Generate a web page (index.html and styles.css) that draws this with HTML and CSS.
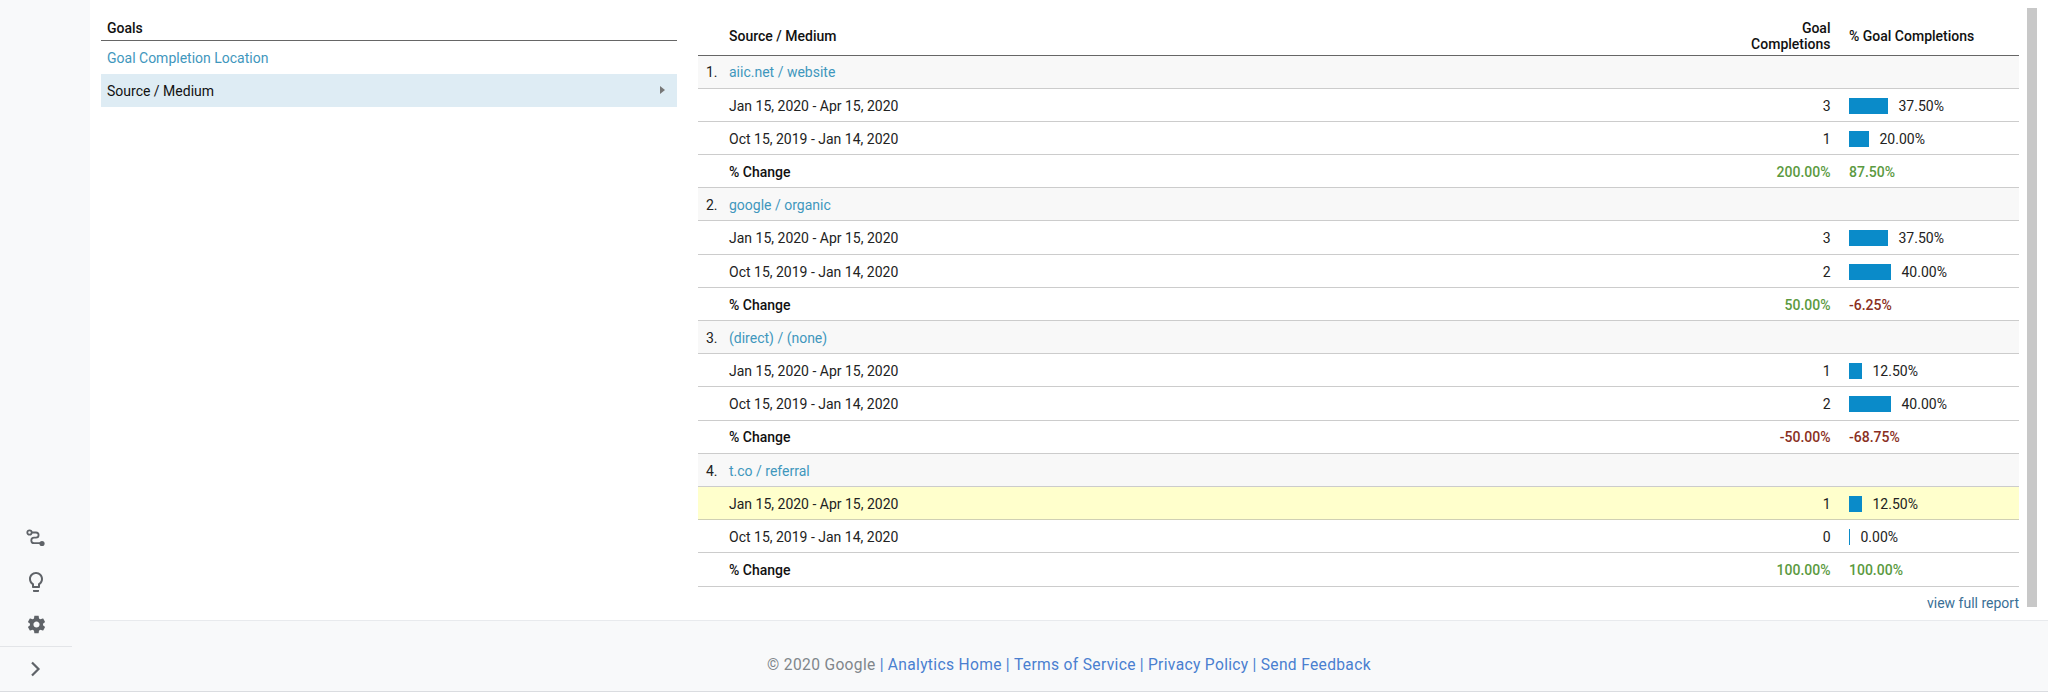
FILE: index.html
```html
<!DOCTYPE html>
<html lang="en">
<head>
  <meta charset="UTF-8">
  <title>Goals - Source / Medium</title>
  <link rel="stylesheet" href="styles.css">
</head>
<body>
  <div class="page">
    <!-- left rail -->
    <div class="rail">
      <div class="rail-icon">
        <svg width="20" height="20" viewBox="0 0 20 20"><circle cx="3.5" cy="3.5" r="2.2" fill="none" stroke="#5f6368" stroke-width="1.8"/><path d="M5.7 3.5h4.3a2.6 2.6 0 0 1 0 5.2H8a2.7 2.7 0 0 0 0 5.4h6.5" fill="none" stroke="#5f6368" stroke-width="1.8"/><circle cx="16" cy="14.5" r="2.6" fill="#5f6368"/></svg>
      </div>
      <div class="rail-icon">
        <svg width="24" height="24" viewBox="0 0 24 24"><path fill="#5f6368" d="M9 21c0 .55.45 1 1 1h4c.55 0 1-.45 1-1v-1H9v1zm3-19C8.14 2 5 5.14 5 9c0 2.38 1.19 4.47 3 5.74V17c0 .55.45 1 1 1h6c.55 0 1-.45 1-1v-2.26c1.81-1.27 3-3.36 3-5.74 0-3.86-3.14-7-7-7zm2.85 11.1l-.85.6V16h-4v-2.3l-.85-.6C7.8 12.16 7 10.63 7 9c0-2.76 2.24-5 5-5s5 2.24 5 5c0 1.63-.8 3.16-2.15 4.1z"/></svg>
      </div>
      <div class="rail-icon">
        <svg width="21" height="21" viewBox="0 0 24 24"><path fill="#5f6368" d="M19.43 12.98c.04-.32.07-.64.07-.98s-.03-.66-.07-.98l2.11-1.65c.19-.15.24-.42.12-.64l-2-3.46c-.12-.22-.39-.3-.61-.22l-2.49 1c-.52-.4-1.08-.73-1.69-.98l-.38-2.65C14.46 2.18 14.25 2 14 2h-4c-.25 0-.46.18-.49.42l-.38 2.65c-.61.25-1.17.59-1.69.98l-2.49-1c-.23-.09-.49 0-.61.22l-2 3.46c-.13.22-.07.49.12.64l2.11 1.65c-.04.32-.07.65-.07.98s.03.66.07.98l-2.11 1.65c-.19.15-.24.42-.12.64l2 3.46c.12.22.39.3.61.22l2.49-1c.52.4 1.08.73 1.69.98l.38 2.65c.03.24.24.42.49.42h4c.25 0 .46-.18.49-.42l.38-2.65c.61-.25 1.17-.59 1.69-.98l2.49 1c.23.09.49 0 .61-.22l2-3.46c.12-.22.07-.49-.12-.64l-2.11-1.65zM12 15.5c-1.93 0-3.5-1.57-3.5-3.5s1.57-3.5 3.5-3.5 3.5 1.57 3.5 3.5-1.57 3.5-3.5 3.5z"/></svg>
      </div>
      <div class="rail-toggle">
        <svg width="20" height="20" viewBox="0 0 20 20"><path d="M6 3.5l6.5 6.5-6.5 6.5" fill="none" stroke="#5f6368" stroke-width="2.2"/></svg>
      </div>
    </div>

    <div class="main">
      <div class="content">
        <!-- dimension list -->
        <div class="dims">
          <div class="dims-title">Goals</div>
          <div class="dim"><a href="#">Goal Completion Location</a></div>
          <div class="dim dim-active">Source / Medium<span class="dim-arrow"></span></div>
        </div>

        <!-- report table -->
        <div class="report">
          <div class="row head">
            <div class="c-rank"></div>
            <div class="c-name">Source / Medium</div>
            <div class="c-num">Goal<br>Completions</div>
            <div class="c-pct">% Goal Completions</div>
          </div>

          <div class="row group">
            <div class="c-rank">1.</div>
            <div class="c-name"><a href="#">aiic.net / website</a></div>
          </div>
          <div class="row">
            <div class="c-rank"></div>
            <div class="c-name">Jan 15, 2020 - Apr 15, 2020</div>
            <div class="c-num">3</div>
            <div class="c-pct"><span class="bar" style="width: 39px"></span>37.50%</div>
          </div>
          <div class="row">
            <div class="c-rank"></div>
            <div class="c-name">Oct 15, 2019 - Jan 14, 2020</div>
            <div class="c-num">1</div>
            <div class="c-pct"><span class="bar" style="width: 20px"></span>20.00%</div>
          </div>
          <div class="row change">
            <div class="c-rank"></div>
            <div class="c-name">% Change</div>
            <div class="c-num up">200.00%</div>
            <div class="c-pct up">87.50%</div>
          </div>

          <div class="row group">
            <div class="c-rank">2.</div>
            <div class="c-name"><a href="#">google / organic</a></div>
          </div>
          <div class="row">
            <div class="c-rank"></div>
            <div class="c-name">Jan 15, 2020 - Apr 15, 2020</div>
            <div class="c-num">3</div>
            <div class="c-pct"><span class="bar" style="width: 39px"></span>37.50%</div>
          </div>
          <div class="row">
            <div class="c-rank"></div>
            <div class="c-name">Oct 15, 2019 - Jan 14, 2020</div>
            <div class="c-num">2</div>
            <div class="c-pct"><span class="bar" style="width: 42px"></span>40.00%</div>
          </div>
          <div class="row change">
            <div class="c-rank"></div>
            <div class="c-name">% Change</div>
            <div class="c-num up">50.00%</div>
            <div class="c-pct down">-6.25%</div>
          </div>

          <div class="row group">
            <div class="c-rank">3.</div>
            <div class="c-name"><a href="#">(direct) / (none)</a></div>
          </div>
          <div class="row">
            <div class="c-rank"></div>
            <div class="c-name">Jan 15, 2020 - Apr 15, 2020</div>
            <div class="c-num">1</div>
            <div class="c-pct"><span class="bar" style="width: 13px"></span>12.50%</div>
          </div>
          <div class="row">
            <div class="c-rank"></div>
            <div class="c-name">Oct 15, 2019 - Jan 14, 2020</div>
            <div class="c-num">2</div>
            <div class="c-pct"><span class="bar" style="width: 42px"></span>40.00%</div>
          </div>
          <div class="row change">
            <div class="c-rank"></div>
            <div class="c-name">% Change</div>
            <div class="c-num down">-50.00%</div>
            <div class="c-pct down">-68.75%</div>
          </div>

          <div class="row group">
            <div class="c-rank">4.</div>
            <div class="c-name"><a href="#">t.co / referral</a></div>
          </div>
          <div class="row hilite">
            <div class="c-rank"></div>
            <div class="c-name">Jan 15, 2020 - Apr 15, 2020</div>
            <div class="c-num">1</div>
            <div class="c-pct"><span class="bar" style="width: 13px"></span>12.50%</div>
          </div>
          <div class="row">
            <div class="c-rank"></div>
            <div class="c-name">Oct 15, 2019 - Jan 14, 2020</div>
            <div class="c-num">0</div>
            <div class="c-pct"><span class="bar" style="width: 1px"></span>0.00%</div>
          </div>
          <div class="row change">
            <div class="c-rank"></div>
            <div class="c-name">% Change</div>
            <div class="c-num up">100.00%</div>
            <div class="c-pct up">100.00%</div>
          </div>

          <div class="full-report"><a href="#">view full report</a></div>
        </div>

        <div class="scroll-thumb"></div>
      </div>

      <div class="footer">
        <span>&copy; 2020 Google</span>
        <span class="sep">|</span> <a href="#">Analytics Home</a>
        <span class="sep">|</span> <a href="#">Terms of Service</a>
        <span class="sep">|</span> <a href="#">Privacy Policy</a>
        <span class="sep">|</span> <a href="#">Send Feedback</a>
      </div>
    </div>
  </div>
</body>
</html>
```
FILE: styles.css
```css
* { box-sizing: border-box; }
body {
  margin: 0;
  font-family: Roboto, Arial, sans-serif;
  font-size: 14px;
  color: #222;
  background-color: #f8f9fa;
  overflow: hidden;
}
a {
  text-decoration: none;
}
.page {
  display: flex;
  height: 692px;
  border-bottom: 1px solid #dadce0;
}

/* left rail */
.rail {
  width: 90px;
  flex-shrink: 0;
  display: flex;
  flex-direction: column;
  justify-content: flex-end;
}
.rail-icon {
  width: 72px;
  height: 43px;
  display: flex;
  align-items: center;
  justify-content: center;
}
.rail-toggle {
  width: 72px;
  height: 45px;
  display: flex;
  align-items: center;
  justify-content: center;
  border-top: 1px solid #e3e5e8;
}

/* main area */
.main {
  flex: 1;
  display: flex;
  flex-direction: column;
}
.content {
  position: relative;
  height: 620px;
  display: flex;
  padding: 0 29px 0 11px;
  background-color: #fff;
}

/* dimension list */
.dims {
  width: 576px;
  flex-shrink: 0;
  margin-right: 21px;
}
.dims-title {
  height: 41px;
  padding: 19px 6px 0;
  font-weight: 500;
  line-height: 18px;
  color: #111;
  border-bottom: 1.5px solid #666;
}
.dim {
  position: relative;
  height: 33px;
  padding: 1px 6px 0;
  line-height: 32px;
}
.dim a {
  color: #3f97bd;
}
.dim-active {
  background-color: #deecf4;
  color: #111;
}
.dim-arrow {
  position: absolute;
  right: 12px;
  top: 12px;
  border-left: 5px solid #777;
  border-top: 4px solid transparent;
  border-bottom: 4px solid transparent;
}

/* report table */
.report {
  flex: 1;
}
.row {
  display: flex;
  align-items: center;
  height: 33.2px;
  padding-top: 1.6px;
  border-bottom: 1.4px solid #ccc;
}
.head {
  height: 55.5px;
  padding-top: 17px;
  font-weight: 500;
  line-height: 16px;
  color: #111;
  border-bottom-color: #666;
}
.group {
  background-color: #f8f8f8;
}
.change {
  font-weight: 500;
  color: #111;
}
.hilite {
  background-color: #ffc;
  border-bottom-color: #cfcfb4;
}
.c-rank {
  width: 31px;
  padding-left: 8px;
  flex-shrink: 0;
}
.c-name {
  flex: 1;
}
.c-name a {
  color: #3f97bd;
}
.c-num {
  text-align: right;
}
.c-pct {
  width: 188.5px;
  padding-left: 18.5px;
  display: flex;
  align-items: center;
}
.bar {
  display: block;
  height: 16px;
  margin-right: 10.5px;
  background-color: #0a8bc9;
}
.up {
  color: #5b9a3f;
}
.down {
  color: #8a2f22;
}
.full-report {
  margin-top: 7px;
  text-align: right;
  line-height: 18px;
}
.full-report a {
  color: #3a6f96;
}
.scroll-thumb {
  position: absolute;
  top: 8px;
  right: 11px;
  width: 10px;
  height: 599px;
  background-color: #c8c8c8;
}

/* footer */
.footer {
  flex: 1;
  display: flex;
  align-items: center;
  justify-content: center;
  gap: 4px;
  padding-top: 18px;
  border-top: 1px solid #e8eaed;
  font-size: 15.6px;
  letter-spacing: .33px;
  color: #80868b;
}
.footer a,
.sep {
  color: #4a7fd0;
}
```
